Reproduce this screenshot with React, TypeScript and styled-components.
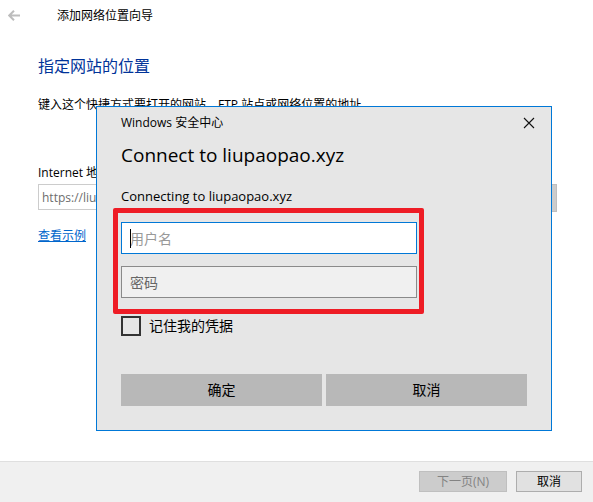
import React from "react";
import styled, { createGlobalStyle } from "styled-components";

const GlobalStyle = createGlobalStyle`
  *, *::before, *::after { box-sizing: border-box; }
  body {
    margin: 0;
    background: #fff;
    color: #000;
    font: 12px/20px "Open Sans", "Noto Sans CJK SC", sans-serif;
  }
  button, input { font: inherit; color: inherit; margin: 0; }
`;

const Wizard = styled.div`
  position: relative;
  display: flex;
  flex-direction: column;
  min-height: 100vh;
`;

const TitleBar = styled.header`
  display: flex;
  align-items: center;
  gap: 36px;
  height: 32px;
  padding: 0 8px;
`;

const BackButton = styled.button`
  display: flex;
  padding: 0;
  border: 0;
  background: none;
`;

const Content = styled.main`
  flex: 1;
  display: flex;
  flex-direction: column;
  align-items: flex-start;
  padding: 22px 36px 24px 38px;
`;

const PageHeading = styled.h1`
  margin: 0 0 17px;
  color: #003399;
  font-size: 16px;
  line-height: 24px;
  font-weight: 400;
`;

const Instruction = styled.p`
  margin: 0 0 48px;
`;

const AddressRow = styled.div`
  display: flex;
  align-self: stretch;
  gap: 8px;
  margin: 1px 0 14px;
`;

const AddressInput = styled.input`
  flex: 1;
  min-width: 0;
  height: 26px;
  padding: 0 3px;
  border: 1px solid #ccc;
  background: #fff;
  && { color: #6d6d6d; }
`;

const FooterButton = styled.button<{ $width: number }>`
  width: ${(p) => p.$width}px;
  height: 21px;
  padding: 0;
  border: 1px solid #adadad;
  background: #e1e1e1;
  line-height: 16px;

  &:disabled {
    border-color: #bfbfbf;
    background: #ccc;
    color: #838383;
  }
`;

const BrowseButton = styled(FooterButton)`
  height: 28px;
`;

const ExampleLink = styled.a`
  color: #0066cc;
  text-decoration-skip-ink: none;
`;

const Footer = styled.footer`
  display: flex;
  justify-content: flex-end;
  gap: 9px;
  padding: 9px 11px 10px;
  border-top: 1px solid #dfdfdf;
  background: #f0f0f0;
`;

const Dialog = styled.section`
  position: absolute;
  top: 106px;
  left: 96px;
  right: 41px;
  padding: 6px 24px 24px;
  border: 1px solid #0078d7;
  background: #e6e6e6;
`;

const DialogBar = styled.div`
  display: flex;
  align-items: center;
  justify-content: space-between;
  margin-right: -12px;
`;

const CloseButton = styled(BackButton)`
  padding: 4px;
`;

const DialogHeading = styled.h2`
  margin: 8px 0 17px;
  font-size: 19px;
  line-height: 28px;
  font-weight: 400;
`;

const Message = styled.p`
  margin: 0 0 16px;
  font-size: 13px;
`;

const Credentials = styled.div`
  position: relative;
  display: grid;
  gap: 12px;
  margin-right: 110px;
`;

const Highlight = styled.div`
  position: absolute;
  inset: -14px -7px -16px -8px;
  border: 5px solid #ee1c25;
  border-radius: 2px;
  pointer-events: none;
`;

const Field = styled.div`
  position: relative;
  display: flex;
`;

const FieldInput = styled.input<{ $active?: boolean }>`
  width: 100%;
  height: 32px;
  padding: 0 8px;
  border: 1px solid ${(p) => (p.$active ? "#0078d7" : "#8a8a8a")};
  border-radius: 0;
  outline: 0;
  background: ${(p) => (p.$active ? "#fff" : "#f0f0f0")};
  font-size: 14px;

  &::placeholder {
    color: ${(p) => (p.$active ? "#999" : "#666")};
    opacity: 1;
  }
`;

const Caret = styled.span`
  position: absolute;
  top: 7px;
  left: 9px;
  width: 1px;
  height: 19px;
  background: #000;
`;

const Remember = styled.label`
  display: flex;
  align-items: center;
  gap: 8px;
  width: fit-content;
  margin: 18px 0 38px;
  font-size: 14px;
`;

const CheckBox = styled.input`
  appearance: none;
  width: 20px;
  height: 20px;
  border: 2px solid #333;

  &:checked {
    background: #333;
  }
`;

const Actions = styled.div`
  display: grid;
  grid-template-columns: 1fr 1fr;
  gap: 4px;
`;

const ActionButton = styled.button`
  height: 32px;
  padding: 0;
  border: 0;
  background: #b8b8b8;
  font-size: 14px;
`;

export default function App() {
  return (
    <Wizard>
      <GlobalStyle />
      <TitleBar>
        <BackButton type="button" aria-label="返回" disabled>
          <svg width="13" height="12" viewBox="0 0 13 12" fill="none" stroke="#bdbdbd" strokeWidth="2">
            <path d="M12 5.5H1.5M6 0.7L1.2 5.5L6 10.3" />
          </svg>
        </BackButton>
        <span>添加网络位置向导</span>
      </TitleBar>
      <Content>
        <PageHeading>指定网站的位置</PageHeading>
        <Instruction>键入这个快捷方式要打开的网站、FTP 站点或网络位置的地址</Instruction>
        <label htmlFor="address">Internet 地址或网络地址(A):</label>
        <AddressRow>
          <AddressInput id="address" defaultValue="https://liupaopao.xyz" />
          <BrowseButton type="button" $width={82} disabled>
            浏览(R)...
          </BrowseButton>
        </AddressRow>
        <ExampleLink href="#examples">查看示例</ExampleLink>
      </Content>
      <Footer>
        <FooterButton type="button" $width={88} disabled>
          下一页(N)
        </FooterButton>
        <FooterButton type="button" $width={66}>
          取消
        </FooterButton>
      </Footer>

      <Dialog role="dialog" aria-labelledby="dialog-heading">
        <DialogBar>
          <span>Windows 安全中心</span>
          <CloseButton type="button" aria-label="关闭">
            <svg width="12" height="12" viewBox="0 0 12 12" fill="none" stroke="#111" strokeWidth="1.1">
              <path d="M1 1L11 11M11 1L1 11" />
            </svg>
          </CloseButton>
        </DialogBar>
        <DialogHeading id="dialog-heading">Connect to liupaopao.xyz</DialogHeading>
        <Message>Connecting to liupaopao.xyz</Message>
        <Credentials>
          <Field>
            <FieldInput $active type="text" aria-label="用户名" placeholder="用户名" />
            <Caret />
          </Field>
          <Field>
            <FieldInput type="password" aria-label="密码" placeholder="密码" />
          </Field>
          <Highlight />
        </Credentials>
        <Remember>
          <CheckBox type="checkbox" />
          记住我的凭据
        </Remember>
        <Actions>
          <ActionButton type="button">确定</ActionButton>
          <ActionButton type="button">取消</ActionButton>
        </Actions>
      </Dialog>
    </Wizard>
  );
}
